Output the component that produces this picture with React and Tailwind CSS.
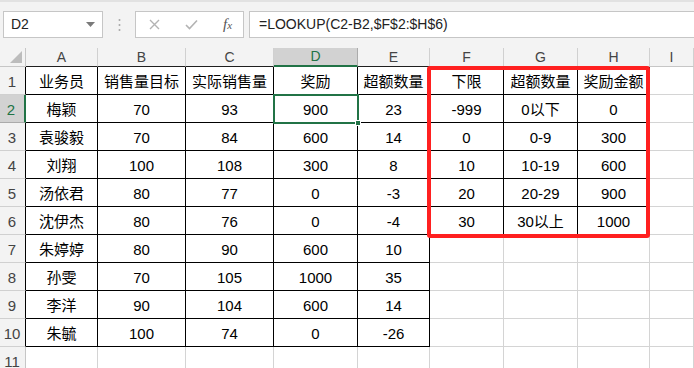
import React from 'react'

const COLS = ['A', 'B', 'C', 'D', 'E', 'F', 'G', 'H', 'I']

const rows = [
  ['业务员', '销售量目标', '实际销售量', '奖励', '超额数量', '下限', '超额数量', '奖励金额'],
  ['梅颖', '70', '93', '900', '23', '-999', '0以下', '0'],
  ['袁骏毅', '70', '84', '600', '14', '0', '0-9', '300'],
  ['刘翔', '100', '108', '300', '8', '10', '10-19', '600'],
  ['汤依君', '80', '77', '0', '-3', '20', '20-29', '900'],
  ['沈伊杰', '80', '76', '0', '-4', '30', '30以上', '1000'],
  ['朱婷婷', '80', '90', '600', '10'],
  ['孙雯', '70', '105', '1000', '35'],
  ['李洋', '90', '104', '600', '14'],
  ['朱毓', '100', '74', '0', '-26'],
  [],
]

function inTable(r, c) {
  // r: 1-based row, c: 0-based column index (A = 0)
  if (c <= 4) return r <= 10
  if (c <= 7) return r <= 6
  return false
}

function Cell({ r, c, text }) {
  const black = inTable(r, c)
  return (
    <div
      className={`flex items-center justify-center pt-[3px] bg-white text-[15px] text-black whitespace-nowrap border-r border-b ${
        black ? 'border-black' : 'border-[#d4d4d4]'
      }`}
    >
      {text}
    </div>
  )
}

function ColHeader({ label, i }) {
  const selected = label === 'D'
  if (selected) {
    return (
      <div className="flex items-center justify-center bg-[#d2d2d2] text-[#217346] text-[14px] border-r border-[#ababab] border-b-2 border-b-[#217346]">
        {label}
      </div>
    )
  }
  return (
    <div
      className={`flex items-center justify-center bg-[#f3f3f3] text-[#444] text-[14px] border-r border-[#d0d0d0] border-b ${
        i <= 4 ? 'border-b-[#1f1f1f]' : 'border-b-[#c6c6c6]'
      }`}
    >
      {label}
    </div>
  )
}

function RowHeader({ n }) {
  if (n === 2) {
    return (
      <div className="flex items-end justify-center pr-[2px] pb-[1px] bg-[#d2d2d2] text-[#217346] text-[15px] border-b border-[#ababab] border-r-2 border-r-[#217346]">
        {n}
      </div>
    )
  }
  return (
    <div
      className={`flex items-end justify-center pr-[1px] pb-[1px] bg-[#f3f3f3] text-[#444] text-[15px] border-b border-[#d0d0d0] border-r ${
        n <= 10 ? 'border-r-black' : 'border-r-[#c6c6c6]'
      }`}
    >
      {n}
    </div>
  )
}

function FormulaBar() {
  return (
    <div className="h-[48px] flex items-start pt-[9px] pl-[3px] border-t-2 border-[#e2e2e2]">
      {/* name box */}
      <div className="w-[100px] h-[27px] bg-white border border-[#c6c6c6] flex items-center justify-between pl-[7px] pr-[7px]">
        <span className="text-[14px] text-[#222]">D2</span>
        <svg width="9" height="5" viewBox="0 0 9 5">
          <path d="M0 0 L9 0 L4.5 5 Z" fill="#7a7a7a" />
        </svg>
      </div>
      <div className="w-[32px] h-[27px] flex items-center justify-center">
        <svg width="3" height="14" viewBox="0 0 3 14">
          <circle cx="1.5" cy="2" r="1" fill="#a8a8a8" />
          <circle cx="1.5" cy="7" r="1" fill="#a8a8a8" />
          <circle cx="1.5" cy="12" r="1" fill="#a8a8a8" />
        </svg>
      </div>
      {/* cancel / enter / fx */}
      <div className="w-[109px] h-[27px] bg-white border border-[#c6c6c6] flex items-center pl-[13px] gap-[25px]">
        <svg width="11" height="11" viewBox="0 0 11 11">
          <path d="M1 1 L10 10 M10 1 L1 10" stroke="#b3b3b3" strokeWidth="1.4" />
        </svg>
        <svg width="13" height="11" viewBox="0 0 13 11">
          <path d="M1 6 L4.5 9.5 L12 1.5" stroke="#b3b3b3" strokeWidth="1.6" fill="none" />
        </svg>
        <span className="text-[#555] text-[15px] italic font-['Liberation_Serif',serif] leading-none">
          f<span className="text-[11px]">x</span>
        </span>
      </div>
      <div className="flex-1 ml-[5px] h-[27px] bg-white border border-[#c6c6c6] border-r-0 flex items-center pl-[9px]">
        <span className="text-[14px] text-[#222]">=LOOKUP(C2-B2,$F$2:$H$6)</span>
      </div>
    </div>
  )
}

export default function App() {
  return (
    <div className="w-[694px] h-[368px] overflow-hidden bg-[#f3f3f3] font-['Liberation_Sans','Noto_Sans_CJK_SC',sans-serif]">
      <FormulaBar />
      <div className="relative grid grid-cols-[26px_72px_88px_88px_84px_72px_74px_74px_72px_1fr] grid-rows-[19px_repeat(11,28px)]">
        {/* corner */}
        <div className="bg-[#f3f3f3] border-r border-b border-[#c6c6c6] flex items-end justify-end p-[3px]">
          <svg width="12" height="12" viewBox="0 0 12 12">
            <path d="M12 0 L12 12 L0 12 Z" fill="#bcbcbc" />
          </svg>
        </div>
        {COLS.map((l, i) => (
          <ColHeader key={l} label={l} i={i} />
        ))}

        {rows.map((cells, ri) => {
          const r = ri + 1
          return (
            <React.Fragment key={r}>
              <RowHeader n={r} />
              {COLS.map((_, c) => (
                <Cell key={c} r={r} c={c} text={cells[c] || ''} />
              ))}
            </React.Fragment>
          )
        })}

        {/* selected cell D2 */}
        <div className="absolute left-[273px] top-[46px] w-[86px] h-[30px] border-2 border-[#217346] pointer-events-none">
          <div className="absolute -right-[4px] -bottom-[4px] w-[6px] h-[6px] bg-[#217346] border border-white" />
        </div>

        {/* red highlight box around F1:H6 */}
        <div className="absolute left-[427px] top-[18px] w-[223px] h-[172px] border-4 border-[#ff2020] rounded-[3px] pointer-events-none" />
      </div>
    </div>
  )
}
